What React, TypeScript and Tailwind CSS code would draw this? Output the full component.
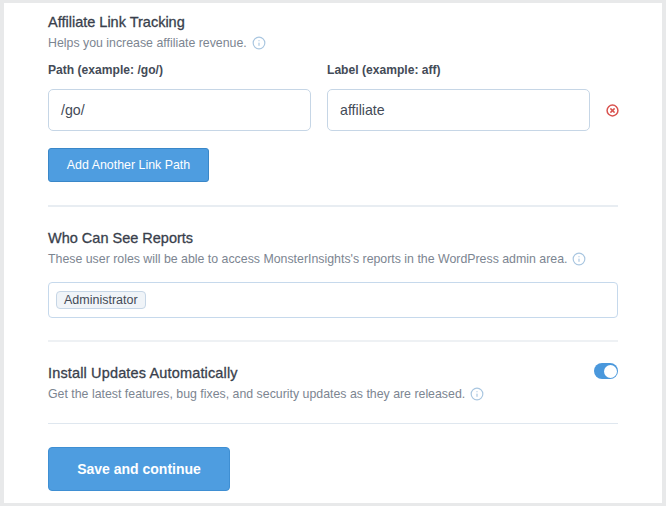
import { Info, CircleX } from "lucide-react";

function Hint({ children }: { children: React.ReactNode }) {
  return (
    <p className="flex items-center h-[18px] text-[12.35px] leading-[18px] text-[#7c8591]">
      <span>{children}</span>
      <Info className="ml-[5px] w-[14px] h-[14px] text-[#a9c6e0]" strokeWidth={2} />
    </p>
  );
}

function Title({ children }: { children: React.ReactNode }) {
  return (
    <h3 className="h-[20px] text-[14.5px] leading-[20px] font-normal text-[#393f4c] [-webkit-text-stroke:0.3px_#393f4c]">
      {children}
    </h3>
  );
}

function Field({ label, value }: { label: string; value: string }) {
  return (
    <div className="w-[263px] shrink-0">
      <label className="block h-[18px] text-[12.1px] leading-[18px] font-bold text-[#444b57]">{label}</label>
      <div className="mt-[10px] h-[42px] flex items-center px-[12px] pt-[2px] bg-white border border-[#c6d6e6] rounded-[5px] text-[14.2px] text-[#444b57]">
        {value}
      </div>
    </div>
  );
}

export default function App() {
  return (
    <div className="w-[666px] h-[506px] bg-[#e8e9ea] pt-[3px] pl-[4px] overflow-hidden font-['Liberation_Sans',Arial,sans-serif]">
      <div className="w-[658px] h-[500px] bg-white pl-[44px] pr-[44px] pt-[9px]">
        <Title>Affiliate Link Tracking</Title>
        <div className="mt-[2px]">
          <Hint>Helps you increase affiliate revenue.</Hint>
        </div>
        <div className="mt-[9px] flex gap-[16px] items-end">
          <Field label="Path (example: /go/)" value="/go/" />
          <Field label="Label (example: aff)" value="affiliate" />
          <div className="h-[42px] flex items-center shrink-0">
            <CircleX className="w-[13px] h-[13px] text-[#d9534f]" strokeWidth={2.75} />
          </div>
        </div>
        <button className="mt-[17px] block w-[161px] h-[34px] bg-[#4e9de0] border border-[#3a87c8] rounded-[3px] text-[12.4px] text-white">
          Add Another Link Path
        </button>
        <div className="mt-[23px] h-[2px] bg-[#e8edf2]" />
        <div className="mt-[21px]">
          <Title>Who Can See Reports</Title>
        </div>
        <div className="mt-[2px]">
          <Hint>These user roles will be able to access MonsterInsights's reports in the WordPress admin area.</Hint>
        </div>
        <div className="mt-[14px] h-[36px] flex items-center px-[7px] border border-[#c6d9ec] rounded-[4px]">
          <span className="h-[18px] px-[7px] flex items-center bg-[#f0f4f8] border border-[#c6d6e6] rounded-[4px] text-[12.5px] text-[#444b57]">
            Administrator
          </span>
        </div>
        <div className="mt-[22px] h-[2px] bg-[#eef1f4]" />
        <div className="mt-[21px] flex items-center justify-between">
          <div className="tracking-[0.15px]">
            <Title>Install Updates Automatically</Title>
          </div>
          <span className="w-[24px] h-[16px] mb-[4px] rounded-full bg-[#4a98dc] flex items-center justify-end pr-[1px]">
            <span className="w-[13px] h-[13px] rounded-full bg-white" />
          </span>
        </div>
        <div className="mt-[2px]">
          <Hint>Get the latest features, bug fixes, and security updates as they are released.</Hint>
        </div>
        <div className="mt-[20px] h-[1px] bg-[#dfe7ef]" />
        <button className="mt-[23px] block w-[182px] h-[44px] bg-[#4e9de0] border border-[#3f8fd3] rounded-[4px] text-[14px] font-bold text-white">
          Save and continue
        </button>
      </div>
    </div>
  );
}
